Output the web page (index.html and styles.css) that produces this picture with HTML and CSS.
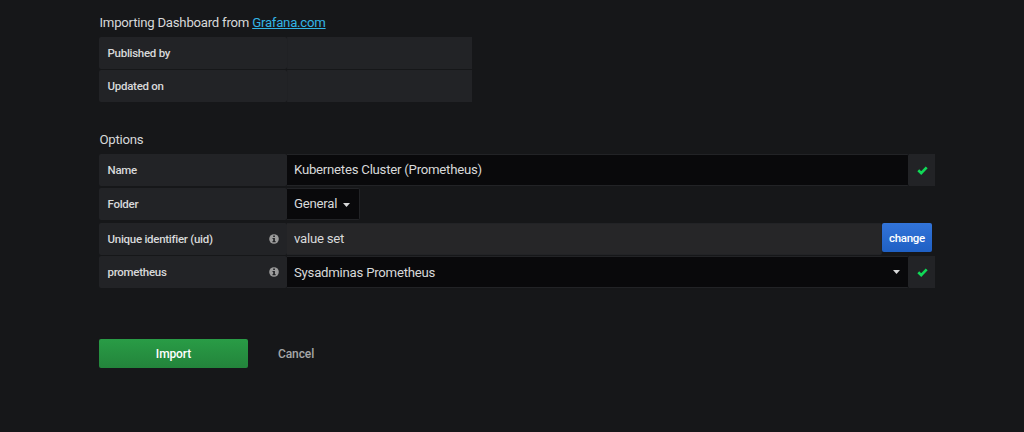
FILE: index.html
```
<!DOCTYPE html>
<html lang="en">
<head>
<meta charset="utf-8">
<title>Import dashboard</title>
<link rel="stylesheet" href="styles.css">
</head>
<body>
<svg class="symbols" aria-hidden="true">
  <symbol id="check" viewBox="0 0 11 9"><path d="M1.3 4.3 4.2 7.1 9.7 1.4" fill="none" stroke="currentColor" stroke-width="2.7"/></symbol>
  <symbol id="info" viewBox="0 0 10 10"><circle cx="5" cy="5" r="4.8" fill="currentColor"/><path d="M4.2 1.5h1.7V3H4.2zM3.5 4h2.4v3h.7v1.2H3.5V7h.7V5.1h-.7z" fill="#222326"/></symbol>
  <symbol id="caret" viewBox="0 0 7 4"><path d="M0 0h7L3.5 4z" fill="currentColor"/></symbol>
</svg>
<main class="page">
  <h2 class="heading heading-source">Importing Dashboard from <a class="link" href="#">Grafana.com</a></h2>
  <div class="details">
    <div class="row"><div class="label">Published by</div><div class="value"></div></div>
    <div class="row"><div class="label">Updated on</div><div class="value"></div></div>
  </div>
  <h2 class="heading heading-options">Options</h2>
  <form class="options">
    <div class="row">
      <div class="label">Name</div>
      <div class="input"><span>Kubernetes Cluster (Prometheus)</span></div>
      <div class="status"><svg class="check"><use href="#check"/></svg></div>
    </div>
    <div class="row">
      <div class="label">Folder</div>
      <div class="input input-small"><span>General</span><svg class="caret"><use href="#caret"/></svg></div>
    </div>
    <div class="row row-uid">
      <div class="label">Unique identifier (uid)<svg class="info"><use href="#info"/></svg></div>
      <div class="input input-disabled"><span>value set</span></div>
      <button class="button button-change" type="button">change</button>
    </div>
    <div class="row">
      <div class="label">prometheus<svg class="info"><use href="#info"/></svg></div>
      <div class="input input-select"><span>Sysadminas Prometheus</span><svg class="caret"><use href="#caret"/></svg></div>
      <div class="status"><svg class="check"><use href="#check"/></svg></div>
    </div>
  </form>
  <div class="actions">
    <button class="button button-import" type="button">Import</button>
    <a class="cancel">Cancel</a>
  </div>
</main>
</body>
</html>
```
FILE: styles.css
```
* { box-sizing: border-box; }
body { margin: 0; background: #161719; color: #d8d9da; font: 13.2px/20px Roboto, sans-serif; letter-spacing: -0.24px; }
.symbols { display: none; }
.page { width: 836px; height: 432px; margin-left: 99px; padding-top: 13px; }
.heading { margin: 0; padding-left: 0.5px; font-size: 13.2px; font-weight: 400; line-height: 19px; white-space: nowrap; }
.heading-source { height: 24px; }
.heading-options { height: 24px; margin-top: 28px; line-height: 20px; }
.link { color: #33b5e5; text-decoration: underline; }
.details { display: flex; flex-direction: column; gap: 1px; width: 373px; }
.row { display: flex; height: 32px; }
.label { display: flex; align-items: center; justify-content: space-between; width: 188px; padding: 0 8px 0 8.5px; background: #222326; border-radius: 2px; font-size: 11.5px; font-weight: 500; letter-spacing: -0.27px; white-space: nowrap; }
.value { flex: 1; background: #222326; border-left: 1px solid #202124; }
.options { display: flex; flex-direction: column; gap: 2px; }
.row-uid { margin: 1px 0 -1px; }
.input { display: flex; align-items: center; flex: 1; padding: 0 7px 2px; background: #09090b; border: 1px solid #222326; border-left: 0; border-radius: 0 2px 2px 0; line-height: 19px; white-space: nowrap; }
.input-small { flex: 0 0 73px; gap: 6px; }
.input-small .caret { margin-top: 4px; }
.input-select { justify-content: space-between; padding-right: 8px; padding-bottom: 0; }
.input-disabled { background: #262628; }
.status { display: flex; align-items: center; justify-content: center; width: 26px; background: #222326; }
.check { width: 11px; height: 9px; color: #10d957; }
.info { width: 10px; height: 10px; color: #9b9b9b; }
.caret { width: 7px; height: 4px; }
.button { padding: 0; border: 0; border-radius: 2px; color: #fff; font: 500 12px/28px Roboto, sans-serif; letter-spacing: -0.1px; }
.button-change { width: 50px; height: 29px; margin-right: 3px; background: linear-gradient(#3274d9, #1f60c4); font-size: 11.5px; letter-spacing: -0.3px; }
.actions { display: flex; align-items: center; gap: 30px; margin-top: 51px; }
.button-import { width: 149px; height: 29px; background: linear-gradient(#299c46, #23843b); }
.cancel { color: #a6a7a8; font-size: 12px; font-weight: 500; letter-spacing: -0.1px; }
```
